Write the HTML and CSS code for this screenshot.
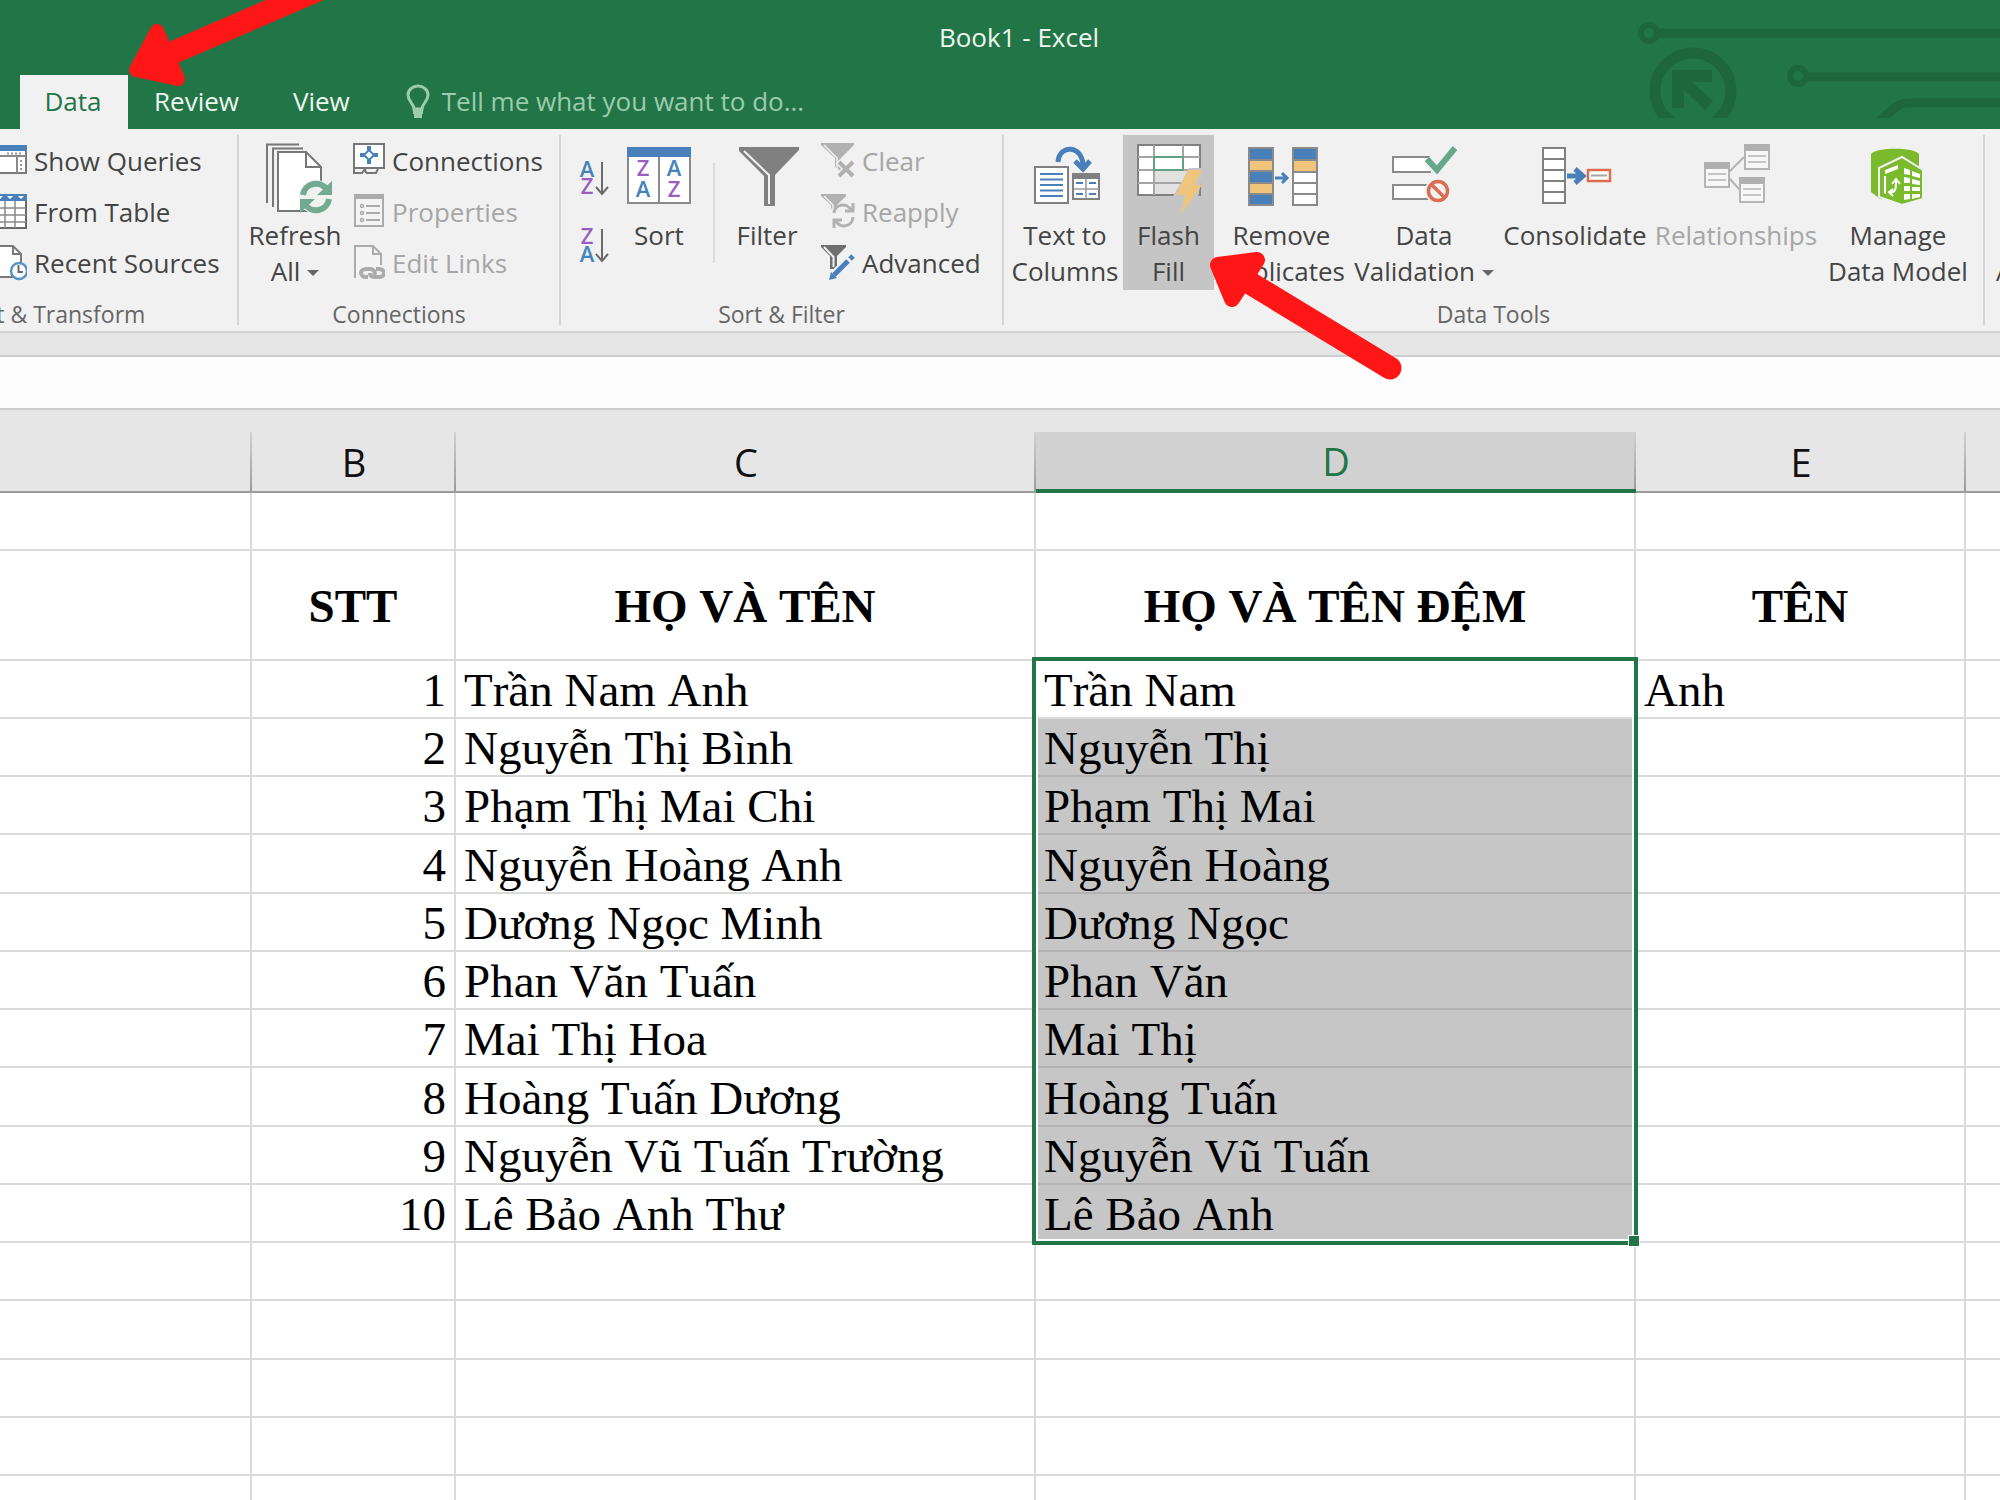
FILE: index.html
```html
<!DOCTYPE html>
<html lang="vi">
<head>
<meta charset="utf-8">
<title>Book1 - Excel</title>
<link rel="stylesheet" href="styles.css">
</head>
<body>
<div class="app">
  <header class="titlebar">
    <svg class="circuit" viewBox="0 0 362 118" aria-hidden="true">
      <g fill="none" stroke="#1e673e" stroke-width="9">
        <circle cx="11" cy="33" r="8" stroke-width="6"/><path d="M19 33H362"/>
        <circle cx="160" cy="76" r="8" stroke-width="6"/><path d="M168 77H362"/>
        <circle cx="55" cy="91" r="38" stroke-width="11"/>
        <path d="M241 122C252 112 260 103 270 103H362"/>
        <path d="M40 108V76H74M40 76L71 106" stroke-width="12"/>
      </g>
    </svg>
    <h1 class="title">Book1 - Excel</h1>
    <nav class="tabs">
      <button class="tab tab-active" type="button">Data</button>
      <button class="tab" type="button">Review</button>
      <button class="tab" type="button">View</button>
      <label class="tell">
        <svg width="24" height="36" viewBox="0 0 24 36" aria-hidden="true"><path d="M8 25C8 19 2 18 2 11a10 9 0 0 1 20 0C22 18 16 19 16 25Z" fill="none" stroke="#9ccbae" stroke-width="3"/><path d="M7 28H17M8 32H16" stroke="#9ccbae" stroke-width="4"/></svg>
        <input type="text" aria-label="Tell me" placeholder="Tell me what you want to do...">
      </label>
    </nav>
    <svg class="arrow arrow-tab" width="220" height="100" viewBox="120 0 220 100" aria-hidden="true"><path d="M136 70L157 31L178 79Z" fill="#ff1616" stroke="#ff1616" stroke-width="14" stroke-linejoin="round"/><path d="M165 56L320 -11" stroke="#ff1616" stroke-width="23"/></svg>
  </header>

  <div class="ribbon">
    <section class="group group-get">
      <div class="tools">
        <div class="stack">
          <button class="small" type="button"><svg class="ico" viewBox="0 0 36 36"><path d="M2 3H35V30H2Z" fill="#fff" stroke="#7a7a7a" stroke-width="2"/><path d="M1 2H36V8H1Z" fill="#4a80ba"/><path d="M2 13H35M26 13V30" stroke="#8a8a8a" stroke-width="2"/><path d="M16 10.500H32M30 17V28" stroke="#999" stroke-width="2" stroke-dasharray="2 2"/></svg>Show Queries</button>
          <button class="small" type="button"><svg class="ico" viewBox="0 0 36 36"><path d="M2 1H35V34H2Z" fill="#fff" stroke="#6a6a6a" stroke-width="2"/><path d="M14 7V34M24 7V34M2 14H35M2 21H35M2 28H35" stroke="#8a8a8a" stroke-width="1.500"/><path d="M1 0H36V7H1Z" fill="#4a80ba"/><path d="M6 2H12L9 5ZM16 2H22L19 5ZM27 2H33L30 5Z" fill="#fff"/></svg>From Table</button>
          <button class="small" type="button"><svg class="ico" viewBox="0 0 36 36"><path d="M4 1H22L30 9V32H4Z" fill="#fff" stroke="#7a7a7a" stroke-width="2"/><path d="M22 1V9H30" fill="none" stroke="#7a7a7a" stroke-width="2"/><circle cx="28" cy="26" r="8" fill="#fff" stroke="#5a93c6" stroke-width="2.500"/><path d="M27.500 20V27H32" fill="none" stroke="#666" stroke-width="2"/></svg>Recent Sources</button>
        </div>
      </div>
      <h2 class="caption">Get &amp; Transform</h2>
    </section>

    <section class="group group-connections">
      <div class="tools">
        <button class="big w-refresh" type="button"><svg class="pic" viewBox="0 0 72 72"><path d="M8 63V4.500H40M14 67V8.500H44" fill="none" stroke="#777" stroke-width="2"/><path d="M19 12H47L62 27V71H19Z" fill="#fff" stroke="#777" stroke-width="2"/><path d="M47 12V27H62" fill="none" stroke="#777" stroke-width="2"/><circle cx="57" cy="57" r="17" fill="#f1f1f1"/><g fill="none" stroke="#72ab92" stroke-width="6"><path d="M44 55A13 13 0 0 1 68 50M70 59A13 13 0 0 1 46 64"/></g><path d="M73 41V55H58ZM41 73V59H56Z" fill="#72ab92"/></svg><span>Refresh<br>All <i class="caret"></i></span></button>
        <div class="stack">
          <button class="small" type="button"><svg class="ico" viewBox="0 0 36 36"><path d="M5 1H35V25H5Z" fill="#fff" stroke="#777" stroke-width="2"/><path d="M5 25V30H13L16 26M17 30H27L29 26M17 30L16 26" fill="none" stroke="#777" stroke-width="2"/><path d="M20 7L25 12L20 17L15 12Z" fill="none" stroke="#4a80ba" stroke-width="2"/><path d="M20 3V7M20 17V21M11 12H15M25 12H29" stroke="#4a80ba" stroke-width="4"/></svg>Connections</button>
          <button class="small" type="button" disabled><svg class="ico" viewBox="0 0 36 36"><path d="M6 1H34V32H6Z" fill="#f4f4f4" stroke="#ababab" stroke-width="2"/><path d="M5 0H35V5H5Z" fill="#ababab"/><path d="M17 12H31M17 19H31M17 26H31" stroke="#ababab" stroke-width="2"/><g fill="none" stroke="#ababab" stroke-width="1.500"><circle cx="13" cy="12" r="1.500"/><circle cx="13" cy="19" r="1.500"/><circle cx="13" cy="26" r="1.500"/></g></svg>Properties</button>
          <button class="small" type="button" disabled><svg class="ico" viewBox="0 0 36 36"><path d="M6 33V1H24L32 9V20" fill="#f4f4f4" stroke="#ababab" stroke-width="2"/><path d="M24 1V9H32" fill="none" stroke="#ababab" stroke-width="2"/><g fill="none" stroke="#ababab" stroke-width="4"><path d="M19 32H17A5 4 0 0 1 17 24H22A5 4 0 0 1 25 30"/><path d="M27 24H30A5 4 0 0 1 30 32H25A5 4 0 0 1 21 28"/></g></svg>Edit Links</button>
        </div>
      </div>
      <h2 class="caption">Connections</h2>
    </section>

    <section class="group group-sort">
      <div class="tools">
        <div class="az">
          <button class="mini" type="button" aria-label="Sort A to Z"><svg width="36" height="36" viewBox="0 0 36 36"><text class="ltr a" x="12" y="16">A</text><text class="ltr z" x="12" y="33">Z</text><path d="M27 1V33M21 26L27 33L33 26" fill="none" stroke="#6a6a6a" stroke-width="2"/></svg></button>
          <button class="mini" type="button" aria-label="Sort Z to A"><svg width="36" height="36" viewBox="0 0 36 36"><text class="ltr z" x="12" y="16">Z</text><text class="ltr a" x="12" y="34">A</text><path d="M27 1V33M21 26L27 33L33 26" fill="none" stroke="#6a6a6a" stroke-width="2"/></svg></button>
        </div>
        <button class="big w-sort" type="button"><svg class="pic" viewBox="0 0 72 72"><path d="M5 8H67V63H5Z" fill="#fff" stroke="#8a8a8a" stroke-width="2"/><path d="M36 16V63" stroke="#8a8a8a" stroke-width="2"/><path d="M4 7H68V17H4Z" fill="#4a80ba"/><text class="ltr z" x="20" y="36">Z</text><text class="ltr a" x="20" y="57">A</text><text class="ltr a" x="51" y="36">A</text><text class="ltr z" x="51" y="57">Z</text></svg><span>Sort</span></button>
        <div class="rule"></div>
        <button class="big w-filter" type="button"><svg class="pic" viewBox="0 0 72 72"><path d="M8 7H68V10L44 35V66H33V36L8 11Z" fill="#808080"/><path d="M13 11L38 35V64" fill="none" stroke="#f1f1f1" stroke-width="2"/></svg><span>Filter</span></button>
        <div class="stack">
          <button class="small" type="button" disabled><svg class="ico" viewBox="0 0 36 36"><path d="M2 0H35V2L22 15V28L16 24V15L2 2Z" fill="#b1b1b1"/><path d="M5 2L18 15V26" fill="none" stroke="#f1f1f1" stroke-width="1.500"/><path d="M19 18L35 34M35 18L19 34" stroke="#f1f1f1" stroke-width="7"/><path d="M20 19L34 33M34 19L20 33" stroke="#b1b1b1" stroke-width="4"/></svg>Clear</button>
          <button class="small" type="button" disabled><svg class="ico" viewBox="0 0 36 36"><path d="M2 0H27V2L18 11V18L12 14V11L2 2Z" fill="#b1b1b1"/><path d="M5 2L14 11V16" fill="none" stroke="#f1f1f1" stroke-width="1.500"/><circle cx="24" cy="21" r="11" fill="#f1f1f1"/><path d="M15 19A9 9 0 0 1 32 16M34 23A9 9 0 0 1 17 27M34 9V17H26M15 34V26H23" fill="none" stroke="#b1b1b1" stroke-width="3"/></svg>Reapply</button>
          <button class="small" type="button"><svg class="ico" viewBox="0 0 36 36"><path d="M2 0H27V2L18 11V24H11V11L2 2Z" fill="#6f6f6f"/><path d="M5 2L14.500 12V22" fill="none" stroke="#f1f1f1" stroke-width="2"/><path d="M15 30L32 13" stroke="#f1f1f1" stroke-width="9"/><path d="M15 30L29 16M31 14L34 11" stroke="#4a80ba" stroke-width="5"/><path d="M12 27L10 35L18 33Z" fill="#4a80ba"/></svg>Advanced</button>
        </div>
      </div>
      <h2 class="caption">Sort &amp; Filter</h2>
    </section>

    <section class="group group-data">
      <div class="tools">
        <button class="big w-text" type="button"><svg class="pic" viewBox="0 0 72 72"><path d="M6 27H39V63H6Z" fill="#fff" stroke="#808080" stroke-width="2"/><path d="M11 34H34M11 39.500H34M11 45H34M11 50.500H34M11 56H34" stroke="#4a80ba" stroke-width="2"/><path d="M44 34H70V59H44Z" fill="#fff" stroke="#808080" stroke-width="2"/><path d="M43 33H71V39H43Z" fill="#808080"/><path d="M57 39V59M44 49H70" stroke="#999" stroke-width="1.500"/><path d="M47 43H54M60 43H67M47 54H54M60 54H67" stroke="#4a80ba" stroke-width="2"/><path d="M29 22C30 4 55 4 54 28" fill="none" stroke="#4a80ba" stroke-width="5"/><path d="M46 21L54 29L61 21" fill="none" stroke="#4a80ba" stroke-width="5"/></svg><span>Text to<br>Columns</span></button>
        <button class="big big-active w-flash" type="button"><svg class="pic" viewBox="0 0 72 72"><path d="M5 5H67V55H5Z" fill="#fff" stroke="#808080" stroke-width="2"/><path d="M21 31H66V54H21Z" fill="#e1e1e1"/><path d="M21 5V55M50 5V30M5 17H67M5 30H67M5 43H50" fill="none" stroke="#a5a5a5" stroke-width="2"/><path d="M21 17H50V30H21Z" fill="#fff" stroke="#61a283" stroke-width="2"/><path d="M56 28H71L62 72L40 56L48 43Z" fill="#c5c5c5"/><path d="M55 30H69L62 45H69L48 74L52 55H43Z" fill="#efc57d"/></svg><span>Flash<br>Fill</span></button>
        <button class="big w-remove" type="button"><svg class="pic" viewBox="0 0 72 72"><path d="M3 8H27V65H3ZM47 8H71V20H47Z" fill="#4a80ba"/><path d="M3 20H27V31H3ZM3 43H27V54H3ZM47 20H71V32H47Z" fill="#efc57d"/><path d="M47 32H71V65H47Z" fill="#fff"/><path d="M3 8H27V65H3ZM47 8H71V65H47ZM3 20H27M3 31H27M3 43H27M3 54H27M47 20H71M47 32H71M47 43H71M47 54H71" fill="none" stroke="#8a8a8a" stroke-width="2"/><path d="M29 38H41M36 33L41 38L36 43" fill="none" stroke="#4a80ba" stroke-width="3"/></svg><span>Remove<br>Duplicates</span></button>
        <button class="big w-valid" type="button"><svg class="pic" viewBox="0 0 72 72"><path d="M43 17H5V32H43M43 45H5V59H43" fill="#fff" stroke="#8a8a8a" stroke-width="2"/><path d="M39 19L49 30L67 8" fill="none" stroke="#f1f1f1" stroke-width="11"/><path d="M39 19L49 30L67 8" fill="none" stroke="#65a98a" stroke-width="6"/><circle cx="50" cy="51" r="13" fill="#f1f1f1"/><circle cx="50" cy="51" r="9.500" fill="none" stroke="#dc6c50" stroke-width="3.500"/><path d="M43 44L57 58" stroke="#dc6c50" stroke-width="3.500"/></svg><span>Data<br>Validation <i class="caret"></i></span></button>
        <button class="big w-cons" type="button"><svg class="pic" viewBox="0 0 72 72"><path d="M4 8H26V63H4ZM4 19H26M4 30H26M4 41H26M4 52H26" fill="#fff" stroke="#808080" stroke-width="2"/><path d="M28 36H44M36 29L44 36L36 43" fill="none" stroke="#4a80ba" stroke-width="5"/><path d="M49 30H71V41H49Z" fill="#fff" stroke="#dc6c50" stroke-width="2.500"/><path d="M52 35.500H68" stroke="#a5a5a5" stroke-width="2"/></svg><span>Consolidate</span></button>
        <button class="big w-rel" type="button" disabled><svg class="pic" viewBox="0 0 72 72"><path d="M29 32L44 17M29 38L40 50" stroke="#b5b5b5" stroke-width="2"/><g fill="#f7f7f7" stroke="#b5b5b5" stroke-width="2"><path d="M5 23H29V47H5ZM45 5H69V29H45ZM40 38H64V62H40Z"/></g><path d="M4 22H30V29H4ZM44 4H70V11H44ZM39 37H65V44H39Z" fill="#b0b0b0"/><path d="M8 34H26M8 40H26M48 16H66M48 22H66M43 49H61M43 55H61" stroke="#c5c5c5" stroke-width="2"/></svg><span>Relationships</span></button>
        <button class="big w-manage" type="button"><svg class="pic" viewBox="0 0 72 72"><path d="M9 14C14 7 52 7 57 14V30L40 60L18 59L9 52Z" fill="#7aba2c"/><path d="M17 28L40 17L61 30V59L40 65L17 57Z" fill="#7aba2c" stroke="#f1f1f1" stroke-width="2"/><path d="M23 30L36 25V29L23 34ZM22 36H24V54L22 53Z" fill="#fff"/><path d="M42 28L48 30V35L42 34ZM50 31L58 34V38L50 36ZM42 37L48 38V43H42ZM50 39L58 41V45L50 44ZM42 46H48V51H42ZM50 47H58V51H50ZM42 54H48V59L42 60ZM50 54H58V57L50 59Z" fill="#fff"/><path d="M28 52C34 53 34 48 34 40M30 44L34 39L38 44M31 49L27 52L31 56" fill="none" stroke="#fff" stroke-width="2"/></svg><span>Manage<br>Data Model</span></button>
      </div>
      <h2 class="caption">Data Tools</h2>
    </section>

    <section class="group group-next">
      <div class="tools"><button class="big big-next" type="button"><span><br>Analysis</span></button></div>
    </section>
    <svg class="arrow arrow-flash" width="210" height="150" viewBox="1200 240 210 150" aria-hidden="true"><path d="M1218 265L1257 260L1232 299Z" fill="#ff1616" stroke="#ff1616" stroke-width="16" stroke-linejoin="round"/><path d="M1240 277L1390 368" stroke="#ff1616" stroke-width="23" stroke-linecap="round"/></svg>
  </div>

  <div class="formula"><input type="text" aria-label="Formula bar"></div>

  <main class="sheet">
    <table class="grid">
      <colgroup><col class="c-a"><col class="c-b"><col class="c-c"><col class="c-d"><col class="c-e"><col></colgroup>
      <thead><tr><th></th><th>B</th><th>C</th><th class="col-active">D</th><th>E</th><th></th></tr></thead>
      <tbody>
        <tr><td></td><td></td><td></td><td></td><td></td><td></td></tr>
        <tr class="heads"><td></td><td>STT</td><td>HỌ VÀ TÊN</td><td>HỌ VÀ TÊN ĐỆM</td><td>TÊN</td><td></td></tr>
      </tbody>
      <tbody class="data">
        <tr><td></td><td class="num">1</td><td>Trần Nam Anh</td><td class="origin">Trần Nam<div class="selection"></div></td><td>Anh</td><td></td></tr>
        <tr><td></td><td class="num">2</td><td>Nguyễn Thị Bình</td><td class="sel">Nguyễn Thị</td><td></td><td></td></tr>
        <tr><td></td><td class="num">3</td><td>Phạm Thị Mai Chi</td><td class="sel">Phạm Thị Mai</td><td></td><td></td></tr>
        <tr><td></td><td class="num">4</td><td>Nguyễn Hoàng Anh</td><td class="sel">Nguyễn Hoàng</td><td></td><td></td></tr>
        <tr><td></td><td class="num">5</td><td>Dương Ngọc Minh</td><td class="sel">Dương Ngọc</td><td></td><td></td></tr>
        <tr><td></td><td class="num">6</td><td>Phan Văn Tuấn</td><td class="sel">Phan Văn</td><td></td><td></td></tr>
        <tr><td></td><td class="num">7</td><td>Mai Thị Hoa</td><td class="sel">Mai Thị</td><td></td><td></td></tr>
        <tr><td></td><td class="num">8</td><td>Hoàng Tuấn Dương</td><td class="sel">Hoàng Tuấn</td><td></td><td></td></tr>
        <tr><td></td><td class="num">9</td><td>Nguyễn Vũ Tuấn Trường</td><td class="sel">Nguyễn Vũ Tuấn</td><td></td><td></td></tr>
        <tr><td></td><td class="num">10</td><td>Lê Bảo Anh Thư</td><td class="sel">Lê Bảo Anh</td><td></td><td></td></tr>
        <tr><td></td><td></td><td></td><td></td><td></td><td></td></tr>
        <tr><td></td><td></td><td></td><td></td><td></td><td></td></tr>
        <tr><td></td><td></td><td></td><td></td><td></td><td></td></tr>
        <tr><td></td><td></td><td></td><td></td><td></td><td></td></tr>
        <tr><td></td><td></td><td></td><td></td><td></td><td></td></tr>
      </tbody>
    </table>
  </main>
</div>
</body>
</html>
```
FILE: styles.css
```css
* { box-sizing: border-box; }

body {
  margin: 0;
  font-family: "Open Sans", "Noto Sans", sans-serif;
  font-size: 26px;
  color: #444;
  background: #fff;
}

button, input { font: inherit; color: inherit; border: 0; padding: 0; margin: 0; background: none; }

.app { display: flex; flex-direction: column; height: 100vh; overflow: hidden; }

/* Title bar and tabs */
.titlebar { position: relative; flex: none; background: #227547; color: #eef6f0; }
.circuit { position: absolute; top: 0; right: 0; width: 362px; height: 118px; }
.title { margin: 0; padding-left: 38px; height: 75px; line-height: 75px; font-size: 26px; font-weight: 400; text-align: center; }
.tabs { display: flex; height: 54px; padding-left: 20px; }
.tab { padding: 0 26px 2px; line-height: 52px; }
.tab + .tab + .tab { padding-left: 28px; }
.tab-active { width: 108px; padding: 0 2px 2px 0; background: #f1f1f1; color: #227547; }
.tell { display: flex; align-items: center; gap: 12px; margin-left: 30px; }
.tell input { width: 400px; height: 52px; padding-bottom: 2px; }
.tell input::placeholder { color: #9ccbae; opacity: 1; }

.arrow { position: absolute; pointer-events: none; z-index: 2; }
.arrow-tab { left: 120px; top: 0; }
.arrow-flash { left: 1200px; top: 111px; }

/* Ribbon */
.ribbon { position: relative; display: flex; flex: none; height: 204px; padding-top: 6px; background: #f1f1f1; border-bottom: 2px solid #d2d2d2; }
.group { position: relative; flex: none; display: flex; flex-direction: column; height: 190px; border-right: 2px solid #d5d5d5; }
.group-get { width: 364px; margin-left: -125px; }
.group-connections { width: 322px; padding-left: 8px; }
.group-sort { width: 443px; padding-left: 14px; }
.group-data { width: 981px; padding-left: 3px; }
.group-next { border: 0; padding-left: 11px; }
.group-get .tools { padding-left: 116px; }
.tools { display: flex; height: 155px; }
.caption { position: absolute; left: 0; right: 0; bottom: -5px; margin: 0; line-height: 32px; font-size: 23px; font-weight: 400; text-align: center; color: #666; }

.stack { display: flex; flex-direction: column; }
.small { display: flex; align-items: center; gap: 7px; height: 51px; white-space: nowrap; }
.ico { width: 36px; height: 36px; flex: none; }
.big { display: flex; flex-direction: column; align-items: center; line-height: 36px; white-space: nowrap; }
.pic { width: 72px; height: 72px; margin: 5px 0; flex: none; overflow: visible; }
.big-active { background: #c5c5c5; }
.big-next { padding-top: 82px; }
button:disabled { color: #a6a6a6; }
.caret { display: inline-block; border: 6px solid transparent; border-top-color: #666; border-bottom: 0; vertical-align: 5px; }

.w-refresh { width: 102px; padding-right: 6px; }
.w-sort { width: 96px; }
.w-filter { width: 104px; }
.w-text { width: 116px; }
.w-flash { width: 91px; }
.w-remove { width: 135px; }
.w-valid { width: 150px; }
.w-cons { width: 152px; }
.w-rel { width: 170px; }
.w-manage { width: 154px; }

.az { display: flex; flex-direction: column; gap: 31px; padding-top: 26px; }
.mini { width: 36px; height: 36px; }
.mini svg { display: block; overflow: visible; }
.rule { width: 2px; height: 100px; margin: 28px 0 0 6px; background: #dcdcdc; }
.ltr { font-size: 22px; font-weight: 600; text-anchor: middle; }
.a { fill: #4584ba; }
.z { fill: #9a5fbd; }

/* Formula bar */
.formula { flex: none; height: 77px; padding-top: 22px; background: #e6e6e6; }
.formula input { display: block; width: 100%; height: 55px; background: #fdfdfd; border: 2px solid #cdcdcd; border-width: 2px 0; }

/* Worksheet */
.sheet { flex: 1; min-height: 0; padding-top: 22px; background: #e6e6e6; }
.grid { width: 100%; table-layout: fixed; border-spacing: 0; background: #fff; }
.c-a { width: 12.6%; }
.c-b { width: 10.2%; }
.c-c { width: 29%; }
.c-d { width: 30%; }
.c-e { width: 16.5%; }

th {
  height: 61px;
  padding: 0;
  font-size: 38px;
  font-weight: 400;
  line-height: 56px;
  color: #111;
  border-bottom: 2px solid #9c9c9c;
  background: linear-gradient(#d0d0d0, #9c9c9c) right / 2px 100% no-repeat #e6e6e6;
}
th:last-child { background-image: none; }
th.col-active { color: #227547; background-color: #d2d2d2; border-bottom: 4px solid #227547; }

td {
  height: 58px;
  padding: 2px 8px 0;
  font-family: "Liberation Serif", serif;
  font-size: 47px;
  line-height: 52px;
  font-kerning: none;
  color: #000;
  white-space: nowrap;
  border-right: 2px solid #dadada;
  border-bottom: 2px solid #dadada;
}
td:last-child { border-right: 0; }
.heads td { height: 110px; text-align: center; font-weight: 700; }
.data tr:nth-child(4n) td { height: 59px; }
.num { text-align: right; }
.sel { background: #c6c6c6; border-bottom-color: #b3b3b3; }
.origin { position: relative; }
.selection { position: absolute; left: -4px; right: -4px; top: -4px; height: 588px; border: 4px solid #227547; box-shadow: inset 0 0 0 2px #fff; }
.selection::after { content: ""; position: absolute; right: -6px; bottom: -6px; width: 10px; height: 10px; background: #227547; border: 1px solid #fff; }
```
